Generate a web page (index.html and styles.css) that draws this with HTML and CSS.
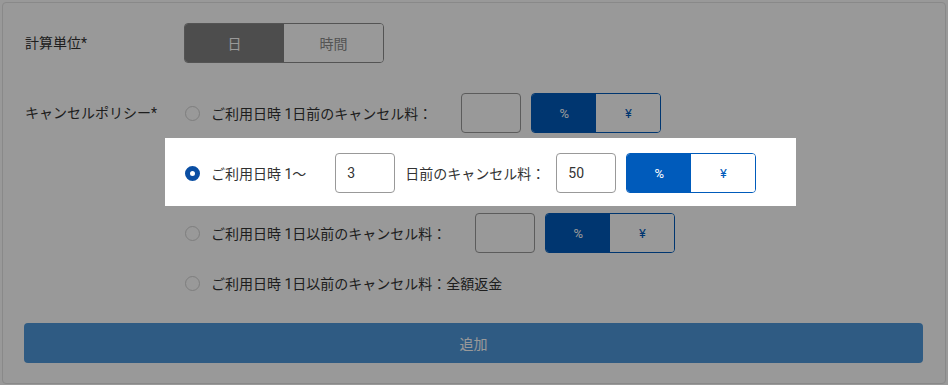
FILE: index.html
```html
<!DOCTYPE html>
<html lang="ja">
<head>
  <meta charset="UTF-8" />
  <meta name="viewport" content="width=device-width, initial-scale=1.0" />
  <link rel="stylesheet" href="styles.css">
  <title>キャンセルポリシー設定</title>
</head>
<body>
<div class="card">
  <div class="form-row">
    <div class="form-label">計算単位*</div>
    <div class="unit-toggle">
      <button class="unit-btn active">日</button>
      <button class="unit-btn">時間</button>
    </div>
  </div>

  <div class="form-row policy">
    <div class="form-label">キャンセルポリシー*</div>
    <div class="options">
      <div class="option">
        <span class="radio"></span>
        <span class="option-text gap-lg">ご利用日時 1日前のキャンセル料：</span>
        <input class="num-input" type="text" value="">
        <div class="fee-toggle">
          <button class="fee-btn active">%</button>
          <button class="fee-btn">¥</button>
        </div>
      </div>

      <div class="option highlight">
        <span class="radio checked"></span>
        <span class="option-text gap-lg">ご利用日時 1〜</span>
        <input class="num-input" type="text" value="3">
        <span class="option-text gap-sm">日前のキャンセル料：</span>
        <input class="num-input" type="text" value="50">
        <div class="fee-toggle">
          <button class="fee-btn active">%</button>
          <button class="fee-btn">¥</button>
        </div>
      </div>

      <div class="option">
        <span class="radio"></span>
        <span class="option-text gap-lg">ご利用日時 1日以前のキャンセル料：</span>
        <input class="num-input" type="text" value="">
        <div class="fee-toggle">
          <button class="fee-btn active">%</button>
          <button class="fee-btn">¥</button>
        </div>
      </div>

      <div class="option plain">
        <span class="radio"></span>
        <span class="option-text">ご利用日時 1日以前のキャンセル料：全額返金</span>
      </div>
    </div>
  </div>

  <button class="add-btn">追加</button>
</div>

<!-- tutorial overlay, the highlighted row sits above it -->
<div class="overlay"></div>
</body>
</html>
```

FILE: styles.css
```css
/* Page */
body {
  font-family: Roboto, "Noto Sans CJK JP", sans-serif;
  font-size: 14px;
  color: #333;
  margin: 0;
  padding: 2px;
  background: #fff;
}

/* Card */
.card {
  border: 1px solid #e4e4e4;
  border-radius: 4px;
  padding: 20px 23px 20px 21px;
  height: 340px;
}

.form-row {
  display: flex;
  align-items: flex-start;
}

.form-row.policy {
  margin-top: 30px;
}

.form-label {
  width: 160px;
  box-sizing: border-box;
  flex-shrink: 0;
  line-height: 40px;
  padding-left: 1px;
}

/* Day / hour toggle */
.unit-toggle {
  display: flex;
  width: 200px;
  height: 40px;
  border: 1px solid #8c8c8c;
  border-radius: 4px;
  overflow: hidden;
  box-sizing: border-box;
}

.unit-btn {
  flex: 1;
  border: none;
  background: #fff;
  color: #8c8c8c;
  font-family: inherit;
  font-size: 14px;
}

.unit-btn.active {
  background: #808080;
  color: #fff;
}

/* Options */
.options {
  display: flex;
  flex-direction: column;
  gap: 20px;
}

.option {
  display: flex;
  align-items: center;
  height: 40px;
  padding-left: 1px;
}

.option.plain {
  height: 20px;
}

.radio {
  width: 15px;
  height: 15px;
  border: 1px solid #d2d2d2;
  border-radius: 50%;
  box-sizing: border-box;
  margin-right: 11px;
  flex-shrink: 0;
}

.radio.checked {
  border: 5px solid #0a4ea3;
  background: #fff;
}

.option-text.gap-lg {
  margin-right: 29px;
}

.option-text.gap-sm {
  margin-right: 11px;
}

.num-input {
  width: 60px;
  height: 40px;
  box-sizing: border-box;
  border: 1px solid #999;
  border-radius: 4px;
  padding: 0 11px;
  font-family: inherit;
  font-size: 14px;
  color: #333;
  margin-right: 10px;
}

/* Percent / yen toggle */
.fee-toggle {
  display: flex;
  width: 130px;
  height: 40px;
  border: 1px solid #005bbb;
  border-radius: 4px;
  overflow: hidden;
  box-sizing: border-box;
}

.fee-btn {
  flex: 1;
  border: none;
  background: #fff;
  color: #005bbb;
  font-family: inherit;
  font-size: 13px;
}

.fee-btn.active {
  background: #005bbb;
  color: #fff;
}

/* Highlighted row */
.option.highlight {
  position: relative;
  z-index: 11;
  align-self: flex-start;
  background: #fff;
  margin: -15px 0 -13px -19px;
  padding: 15px 40px 13px 20px;
}

/* Add button */
.add-btn {
  display: block;
  width: 899px;
  height: 40px;
  margin: 30px 0 0 0;
  border: none;
  border-radius: 4px;
  background: #4f98da;
  color: #fff;
  font-family: inherit;
  font-size: 14px;
}

/* Overlay */
.overlay {
  position: fixed;
  top: 0;
  left: 0;
  right: 0;
  bottom: 0;
  background: rgba(0, 0, 0, 0.4);
  z-index: 10;
}
```
